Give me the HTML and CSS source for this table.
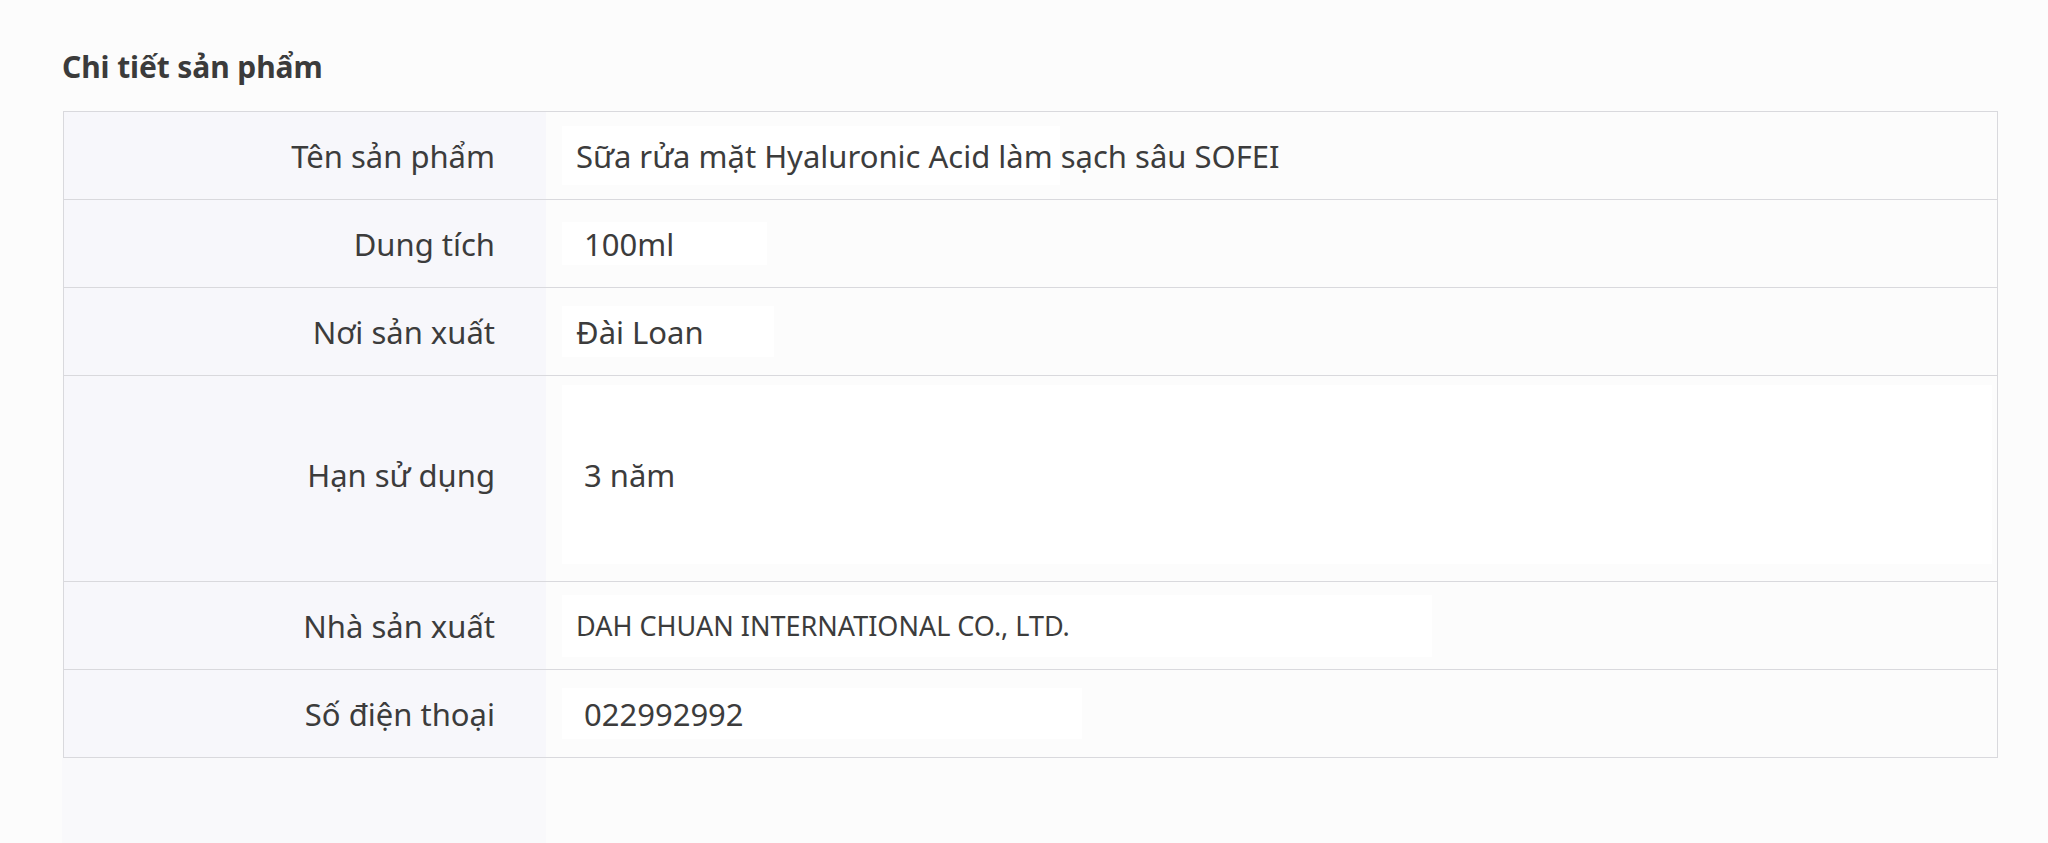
FILE: index.html
```html
<!DOCTYPE html>
<html lang="vi">
<head>
<meta charset="utf-8">
<title>Chi tiết sản phẩm</title>
<link rel="stylesheet" href="styles.css">
</head>
<body>
<section class="details">
  <h2 class="details-title">Chi tiết sản phẩm</h2>
  <div class="spec-table">
    <div class="spec-row">
      <div class="spec-label">Tên sản phẩm</div>
      <div class="spec-value"><span class="chip chip-name">Sữa rửa mặt Hyaluronic Acid làm sạch sâu SOFEI</span></div>
    </div>
    <div class="spec-row">
      <div class="spec-label">Dung tích</div>
      <div class="spec-value"><span class="chip chip-volume indent">100ml</span></div>
    </div>
    <div class="spec-row">
      <div class="spec-label">Nơi sản xuất</div>
      <div class="spec-value"><span class="chip chip-origin">Đài Loan</span></div>
    </div>
    <div class="spec-row spec-row-tall">
      <div class="spec-label">Hạn sử dụng</div>
      <div class="spec-value"><span class="chip chip-expiry indent">3 năm</span></div>
    </div>
    <div class="spec-row">
      <div class="spec-label">Nhà sản xuất</div>
      <div class="spec-value"><span class="chip chip-maker small">DAH CHUAN INTERNATIONAL CO., LTD.</span></div>
    </div>
    <div class="spec-row">
      <div class="spec-label">Số điện thoại</div>
      <div class="spec-value"><span class="chip chip-phone indent">022992992</span></div>
    </div>
  </div>
  <div class="spec-tail">
    <div class="tail-label"></div>
    <div class="tail-value"></div>
  </div>
</section>
</body>
</html>
```

FILE: styles.css
```css
* {
  box-sizing: border-box;
}

html, body {
  margin: 0;
  padding: 0;
  height: 100%;
  overflow: hidden;
}

body {
  background: #fcfcfc;
  font-family: "Noto Sans", "Open Sans", sans-serif;
  color: #3d3d3d;
}

.details {
  padding: 46px 50px 0 62px;
}

.details-title {
  margin: 0 0 24px 0;
  font-size: 30px;
  font-weight: 700;
  line-height: 41px;
  color: #3b3b3b;
  letter-spacing: -0.1px;
}

.spec-table {
  border: 1px solid #d9d9dd;
  border-bottom: none;
  margin-left: 1px;
}

.spec-row {
  display: grid;
  grid-template-columns: 482px 1fr;
  height: 88px;
  border-bottom: 1px solid #d9d9dd;
}

.spec-row-tall {
  height: 206px;
}

.spec-row-tall .spec-label,
.spec-row-tall .spec-value {
  padding-bottom: 8px;
}

.spec-label {
  background: #f7f7fb;
  display: flex;
  align-items: center;
  justify-content: flex-end;
  padding-right: 51px;
  font-size: 31px;
  line-height: 42px;
  color: #3c3c3c;
  white-space: nowrap;
}

.spec-value {
  background: #fcfcfc;
  display: flex;
  align-items: center;
  padding-left: 16px;
  font-size: 31px;
  line-height: 42px;
  color: #3c3c3c;
}

.chip {
  display: flex;
  align-items: center;
  background: #ffffff;
  padding: 0 14px;
  white-space: nowrap;
}

.chip.indent {
  padding-left: 22px;
}

.chip.small {
  font-size: 27px;
}

.chip-name {
  width: 498px;
  height: 59px;
}

.chip-volume {
  width: 205px;
  height: 43px;
}

.chip-origin {
  width: 212px;
  height: 51px;
}

.chip-expiry {
  width: 1430px;
  height: 179px;
}

.chip-maker {
  width: 870px;
  height: 62px;
}

.chip-phone {
  width: 520px;
  height: 51px;
}

.spec-tail {
  display: grid;
  grid-template-columns: 484px 1fr;
  height: 90px;
}

.tail-label {
  background: #f9f9fb;
}

.tail-value {
  background: #fcfcfc;
}
```
